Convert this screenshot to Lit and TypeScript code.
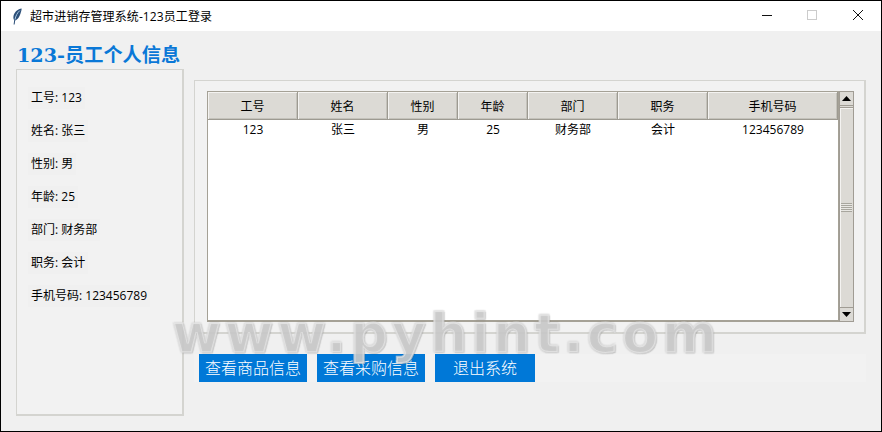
import { LitElement, html, css, svg } from "lit";
import { customElement } from "lit/decorators.js";

const COLS = [
  { t: "工号", v: "123", w: 90 },
  { t: "姓名", v: "张三", w: 90 },
  { t: "性别", v: "男", w: 70 },
  { t: "年龄", v: "25", w: 70 },
  { t: "部门", v: "财务部", w: 90 },
  { t: "职务", v: "会计", w: 90 },
  { t: "手机号码", v: "123456789", w: 130 },
];
const INFO = ["工号: 123", "姓名: 张三", "性别: 男", "年龄: 25", "部门: 财务部", "职务: 会计", "手机号码: 123456789"];

const feather = svg`<svg width="10" height="17" viewBox="0 0 10 17"><path d="M9.6 .4 C6 1 2.6 3.6 1.6 7.6 C1.1 9.6 1.4 11.4 2.2 12.2 L1.6 16.4 L2.6 16.4 L3.2 12.4 C6 11.6 8 8 8.8 4.6 C9.2 3 9.7 1.6 9.6 .4 Z" fill="#2c4f78"/><path d="M7.8 2.6 C5.4 4.6 3.6 8 3 11.6" fill="none" stroke="#a9c8e4" stroke-width="1"/></svg>`;

@customElement("app-root")
export class AppRoot extends LitElement {
  static styles = css`
    :host { display: block; width: 882px; height: 432px; font-family: "Open Sans", "Noto Sans CJK SC", sans-serif; color: #000; }
    .win { position: relative; width: 882px; height: 432px; box-sizing: border-box; border: 1px solid #000; background: #f0f0f0; overflow: hidden; display: flex; flex-direction: column; }
    .bar { height: 30px; flex: none; background: #fff; display: flex; align-items: center; padding-left: 11px; font: 12px "Open Sans", "Noto Sans CJK SC", sans-serif; }
    .bar .ico { width: 10px; height: 17px; margin-right: 8px; display: block; }
    .bar .ttl { flex: 1; letter-spacing: .1px; }
    .ctl { width: 46px; height: 30px; display: flex; align-items: center; justify-content: center; }
    .main { flex: 1; display: flex; padding-left: 15px; gap: 10px; }
    .left { width: 168px; flex: none; display: flex; flex-direction: column; }
    .heading { height: 38px; box-sizing: border-box; padding: 13px 0 0 1px; font: bold 19.2px/24px "DejaVu Serif", "Noto Sans CJK SC", serif; color: #0a78d7; white-space: nowrap; }
    .panel { height: 347px; box-sizing: border-box; background: #f2f2f2; border: solid #d4d4d0; border-width: 1px 2px 2px 1px; padding: 17px 0 0 11px; display: flex; flex-direction: column; align-items: flex-start; gap: 11px; }
    .info { height: 22px; line-height: 22px; padding: 0 3px; background: #f0f0f0; font-size: 12px; white-space: nowrap; }
    .right { width: 672px; flex: none; padding-top: 49px; display: flex; flex-direction: column; }
    .frame { height: 254px; box-sizing: border-box; background: #f2f2f2; border: 1px solid #d4d4d0; border-right-width: 2px; border-bottom-width: 2px; padding: 10px 0 0 12px; display: flex; }
    .tree { width: 632px; height: 231px; box-sizing: border-box; background: #fff; border: solid #a5a196; border-width: 1px 1px 2px 1px; display: flex; flex-direction: column; }
    .hdr { display: flex; height: 28px; flex: none; }
    .hc { box-sizing: border-box; height: 28px; background: #dcdad5; border: solid #9d9a91; border-width: 0 1px 1px 0; box-shadow: inset 1px 1px 0 #f4f3f1, inset -1px -1px 0 #c4c2bb; display: flex; align-items: center; justify-content: center; font-size: 12px; }
    .row { display: flex; height: 18px; }
    .rc { display: flex; align-items: center; justify-content: center; font-size: 12px; }
    .sb { width: 15px; height: 231px; box-sizing: border-box; background: #dcdad5; border: 1px solid #a09c94; display: flex; flex-direction: column; }
    .arrow { height: 13px; flex: none; display: flex; align-items: center; justify-content: center; background: #dcdad5; }
    .arrow.up { border-bottom: 1px solid #a09c94; }
    .arrow.dn { border-top: 1px solid #a09c94; }
    .thumb { flex: 1; display: flex; align-items: center; justify-content: center; background: #dcdad5; box-shadow: inset 1px 1px 0 #f4f3f1; margin-top: 1px; border-top: 1px solid #a09c94; }
    .grip { width: 11px; height: 9px; background: repeating-linear-gradient(#a8a69e 0 1px, #e8e7e3 1px 2px); }
    .btns { margin-top: 20px; height: 28px; background: #f2f2f2; padding-left: 5px; display: flex; gap: 10px; }
    .btn { height: 28px; border: 0; padding: 0 0 2px; background: #0078d7; color: #fff; font: 16px "Noto Sans CJK SC", sans-serif; font-weight: 300; display: flex; align-items: center; justify-content: center; }
    .wm { position: absolute; left: 171px; top: 306px; font: bold 53px/53px "DejaVu Sans", sans-serif; letter-spacing: 3.6px; color: rgba(236,236,236,.72); -webkit-text-stroke: 2px rgba(232,232,232,.62); text-shadow: 0 0 2px rgba(70,70,70,.6), 1px 1px 1px rgba(70,70,70,.3); white-space: nowrap; pointer-events: none; }
  `;

  render() {
    return html`<div class="win">
      <div class="bar">
        <span class="ico">${feather}</span>
        <span class="ttl">超市进销存管理系统-123员工登录</span>
        <span class="ctl"><svg width="12" height="12"><path d="M2 5.5H12" stroke="#111" stroke-width="1"/></svg></span>
        <span class="ctl"><svg width="12" height="12"><rect x="1.5" y=".5" width="9" height="9" fill="none" stroke="#ccc"/></svg></span>
        <span class="ctl"><svg width="12" height="12"><path d="M1 0L11 10M11 0L1 10" stroke="#111" stroke-width="1"/></svg></span>
      </div>
      <div class="main">
        <div class="left">
          <div class="heading">123-员工个人信息</div>
          <div class="panel">${INFO.map((t) => html`<div class="info">${t}</div>`)}</div>
        </div>
        <div class="right">
          <div class="frame">
            <div class="tree">
              <div class="hdr">${COLS.map((c) => html`<div class="hc" style="width:${c.w}px">${c.t}</div>`)}</div>
              <div class="row">${COLS.map((c) => html`<div class="rc" style="width:${c.w}px">${c.v}</div>`)}</div>
            </div>
            <div class="sb">
              <div class="arrow up"><svg width="9" height="5"><path d="M4.5 0L9 5H0Z" fill="#000"/></svg></div>
              <div class="thumb"><div class="grip"></div></div>
              <div class="arrow dn"><svg width="9" height="5"><path d="M0 0H9L4.5 5Z" fill="#000"/></svg></div>
            </div>
          </div>
          <div class="btns">
            <button class="btn" style="width:108px">查看商品信息</button>
            <button class="btn" style="width:108px">查看采购信息</button>
            <button class="btn" style="width:100px">退出系统</button>
          </div>
        </div>
      </div>
      <div class="wm">www.pyhint.com</div>
    </div>`;
  }
}
